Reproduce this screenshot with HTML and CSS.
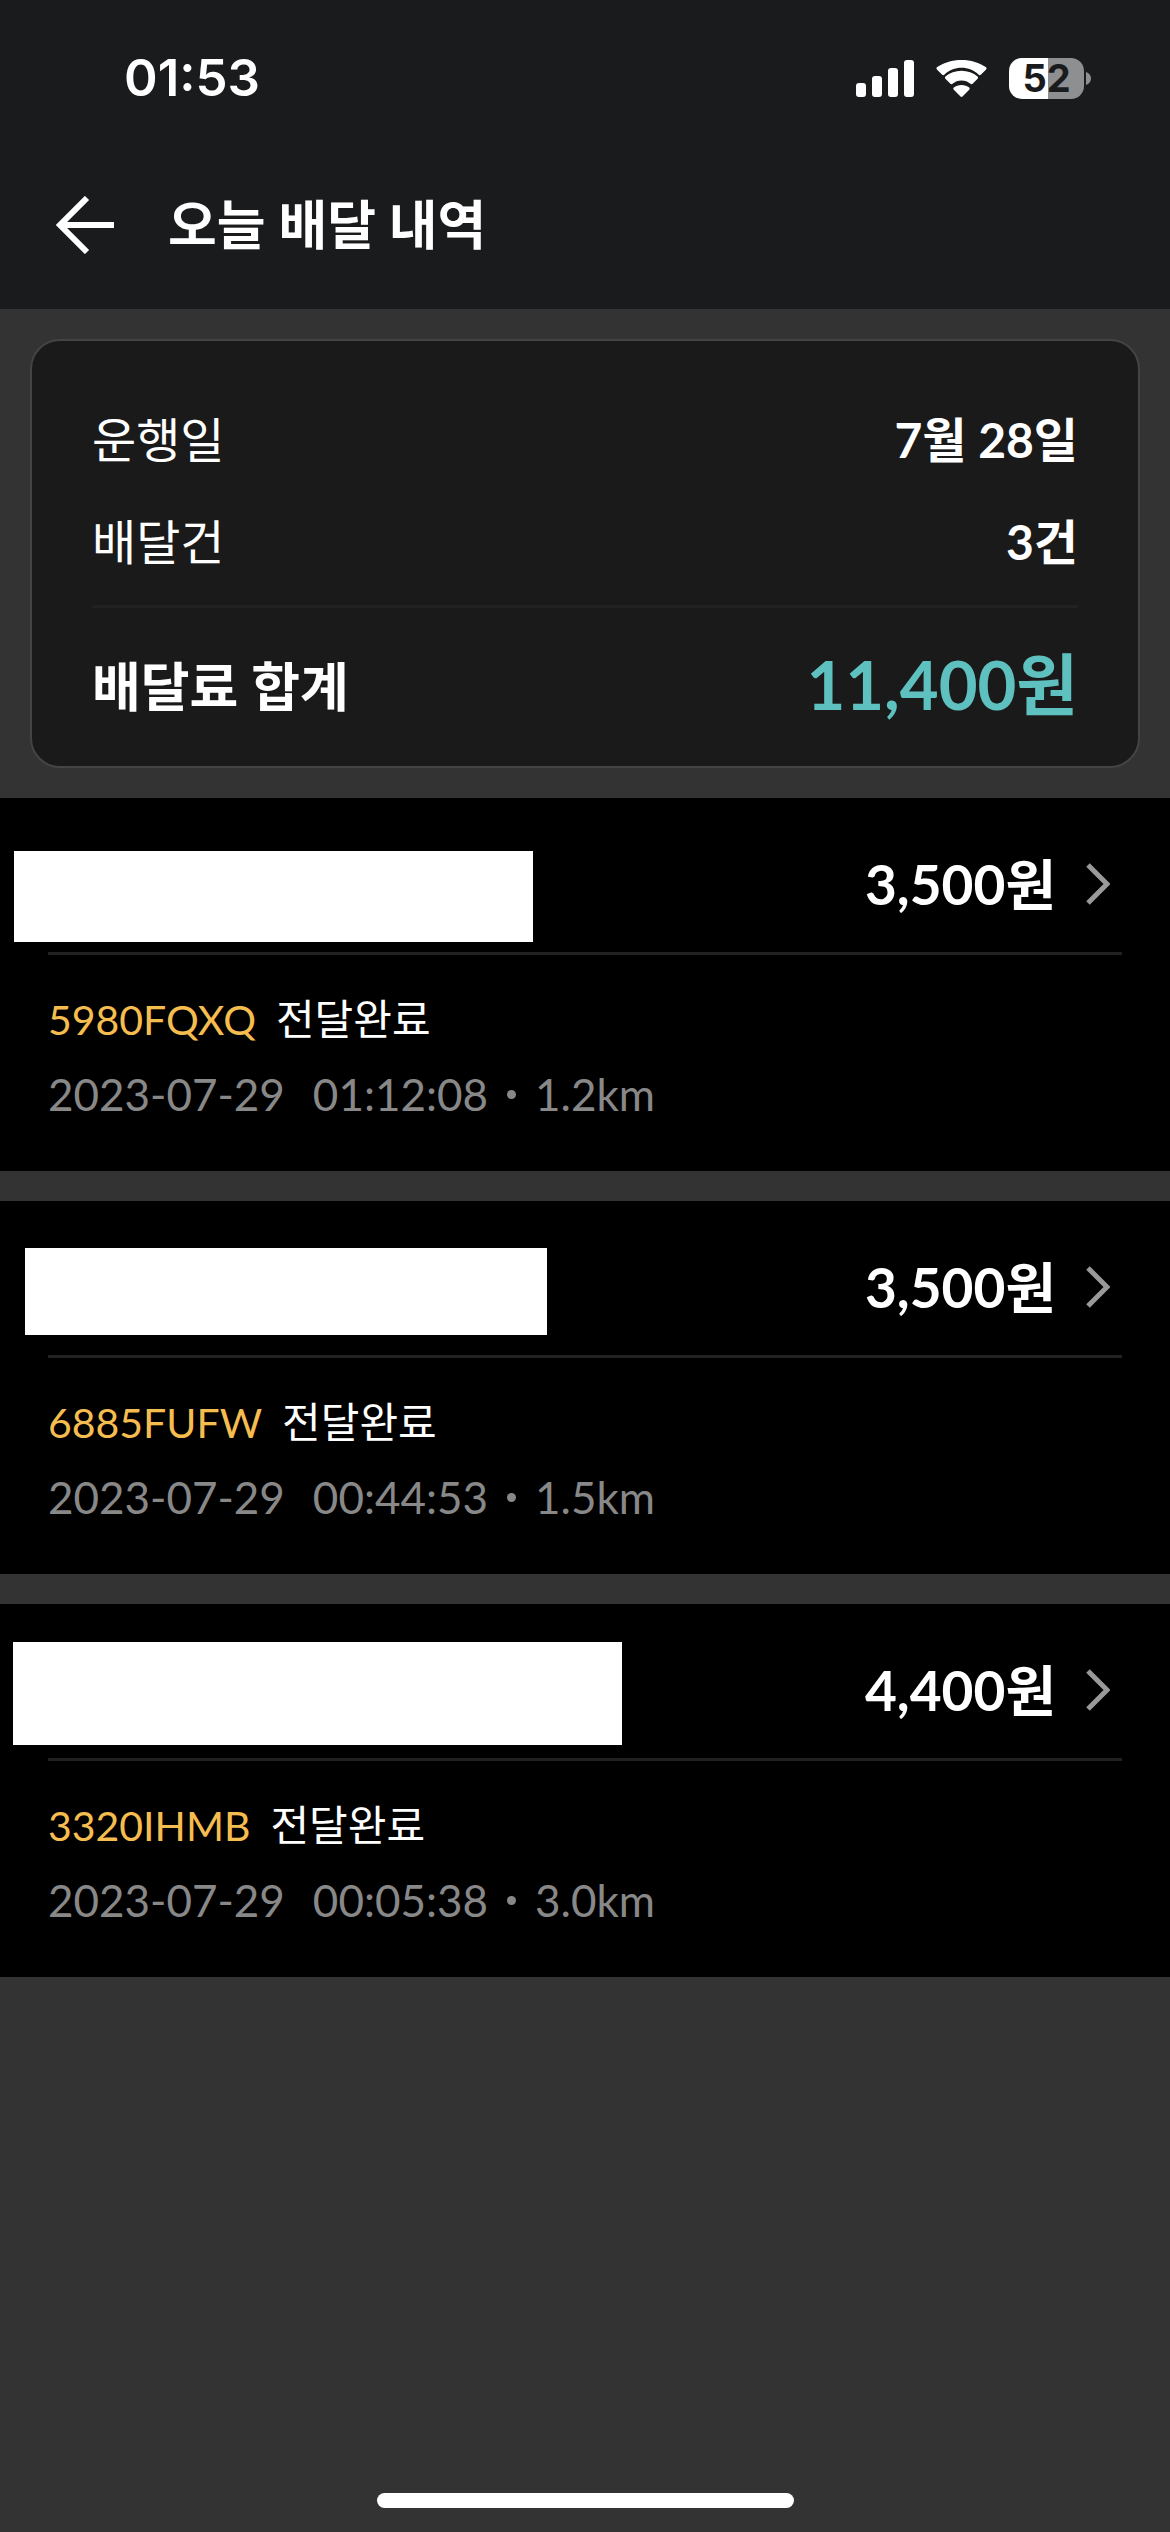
FILE: index.html
```html
<!DOCTYPE html>
<html lang="ko">
<head>
<meta charset="utf-8">
<meta name="viewport" content="width=device-width, initial-scale=1">
<title>오늘 배달 내역</title>
<link rel="stylesheet" href="styles.css">
</head>
<body>
<header class="top">
  <div class="status">
    <time class="clock">01:53</time>
    <div class="indicators">
      <svg class="signal" viewBox="0 0 58 37" aria-hidden="true">
        <rect x="0" y="23" width="10" height="14" rx="3"/>
        <rect x="16" y="16" width="10" height="21" rx="3"/>
        <rect x="32" y="8" width="10" height="29" rx="3"/>
        <rect x="48" y="0" width="10" height="37" rx="3"/>
      </svg>
      <svg class="wifi" viewBox="0 0 51 37" aria-hidden="true">
        <path d="M25.500 7.800c6.500 0 12.600 2.500 17.200 6.900.6.600 1.500.6 2.100 0l5.300-5.300c.6-.6.600-1.500 0-2.100C43.500 2.700 34.800 0 25.500 0S7.500 2.700.9 7.300c-.6.600-.6 1.500 0 2.100l5.300 5.300c.6.600 1.500.6 2.100 0 4.600-4.400 10.700-6.900 17.200-6.900z"/>
        <path d="M25.500 20.400c3.400 0 6.600 1.200 9 3.400.6.500 1.500.5 2.100 0l5-5c.6-.6.6-1.600 0-2.200-4.300-3.800-10-5.900-16.100-5.900s-11.800 2.100-16.100 5.900c-.6.600-.6 1.600 0 2.200l5 5c.6.500 1.500.5 2.100 0 2.400-2.200 5.600-3.400 9-3.400z"/>
        <path d="M33.200 29.700c.6-.6.6-1.500 0-2.100-2-1.700-4.700-2.700-7.700-2.700s-5.700 1-7.700 2.700c-.6.600-.6 1.500 0 2.100l6.700 6.800c.6.600 1.400.6 2 0z"/>
      </svg>
      <div class="battery">
        <span class="battery-level">52</span>
        <svg class="battery-cap" viewBox="0 0 6 13" aria-hidden="true"><path d="M0 0c3 1 5 3.500 5 6.500S3 12 0 13z"/></svg>
      </div>
    </div>
  </div>
  <div class="title-bar">
    <button class="back" type="button" aria-label="뒤로">
      <svg viewBox="0 0 60 58" aria-hidden="true"><path d="M31 2L4 29l27 27M4 29h54"/></svg>
    </button>
    <h1 class="title">오늘 배달 내역</h1>
  </div>
</header>

<main class="content">
  <dl class="summary">
    <div class="row"><dt>운행일</dt><dd>7월 28일</dd></div>
    <div class="row"><dt>배달건</dt><dd>3건</dd></div>
    <div class="row total"><dt>배달료 합계</dt><dd>11,400원</dd></div>
  </dl>

  <ul class="deliveries">
    <li class="delivery">
      <span class="mask mask-a"></span>
      <a class="fee" href="#5980FQXQ">3,500원<svg class="chevron" viewBox="0 0 24 42" aria-hidden="true"><path d="M2 2l19 19L2 40"/></svg></a>
      <div class="details">
        <p class="state"><span class="code">5980FQXQ</span><span>전달완료</span></p>
        <p class="meta"><span>2023-07-29</span><span class="time">01:12:08</span><i class="dot"></i><span>1.2km</span></p>
      </div>
    </li>
    <li class="delivery">
      <span class="mask mask-b"></span>
      <a class="fee" href="#6885FUFW">3,500원<svg class="chevron" viewBox="0 0 24 42" aria-hidden="true"><path d="M2 2l19 19L2 40"/></svg></a>
      <div class="details">
        <p class="state"><span class="code">6885FUFW</span><span>전달완료</span></p>
        <p class="meta"><span>2023-07-29</span><span class="time">00:44:53</span><i class="dot"></i><span>1.5km</span></p>
      </div>
    </li>
    <li class="delivery">
      <span class="mask mask-c"></span>
      <a class="fee" href="#3320IHMB">4,400원<svg class="chevron" viewBox="0 0 24 42" aria-hidden="true"><path d="M2 2l19 19L2 40"/></svg></a>
      <div class="details">
        <p class="state"><span class="code">3320IHMB</span><span>전달완료</span></p>
        <p class="meta"><span>2023-07-29</span><span class="time">00:05:38</span><i class="dot"></i><span>3.0km</span></p>
      </div>
    </li>
  </ul>
</main>

<footer class="home"><span class="home-bar"></span></footer>
</body>
</html>
```

FILE: styles.css
```css
* {
  box-sizing: border-box;
}

body {
  margin: 0;
  min-height: 100vh;
  display: flex;
  flex-direction: column;
  background: #333;
  color: #fff;
  font-family: Lato, "Noto Sans CJK KR", sans-serif;
  font-size: 42px;
}

h1, p, ul, dl, dd {
  margin: 0;
  padding: 0;
}

/* Header */
.top {
  background: #1a1b1d;
}

.status {
  display: flex;
  align-items: center;
  justify-content: space-between;
  height: 141px;
  padding: 15px 78px 0 124px;
}

.clock {
  font: 600 51px/60px Inter, sans-serif;
}

.indicators {
  display: flex;
  align-items: center;
  gap: 22px;
}

.signal {
  width: 58px;
  height: 37px;
  fill: #fff;
}

.wifi {
  width: 51px;
  height: 37px;
  fill: #fff;
}

.battery {
  display: flex;
  align-items: center;
  gap: 2px;
}

.battery-level {
  width: 75px;
  border-radius: 13px;
  background: linear-gradient(to right, #fff 52%, #8e8f91 52%);
  color: #1a1b1d;
  font: 700 38px/41px Inter, sans-serif;
  text-align: center;
}

.battery-cap {
  width: 6px;
  height: 13px;
  fill: #8e8f91;
}

.title-bar {
  display: flex;
  align-items: center;
  gap: 52px;
  height: 168px;
  padding-left: 56px;
}

.back {
  display: flex;
  padding: 0;
  border: 0;
  background: none;
}

.back svg {
  width: 60px;
  height: 58px;
  fill: none;
  stroke: #fff;
  stroke-width: 6;
}

.title {
  font-size: 53px;
  font-weight: 700;
  line-height: 66px;
}

/* Summary card */
.content {
  flex: 1;
}

.summary {
  margin: 30px;
  padding: 48px 60px 0;
  border: 2px solid #444;
  border-radius: 30px;
  background: #1a1a1a;
  font-size: 48px;
}

.row {
  display: flex;
  align-items: flex-start;
  justify-content: space-between;
  line-height: 102px;
}

.row dd {
  font-weight: 700;
}

.total {
  margin-top: 12px;
  border-top: 3px solid #212121;
  font-size: 53px;
  font-weight: 700;
  line-height: 158px;
}

.total dd {
  color: #5fc1bf;
  font-size: 67px;
  line-height: 152px;
}

/* Delivery list */
.deliveries {
  display: grid;
  gap: 30px;
  list-style: none;
}

.delivery {
  position: relative;
  padding: 0 48px 39px;
  background: #000;
}

.fee {
  display: flex;
  align-items: center;
  justify-content: flex-end;
  gap: 30px;
  padding: 18px 12px 0 0;
  border-bottom: 3px solid #222;
  color: #fff;
  font-size: 55px;
  font-weight: 700;
  line-height: 136px;
  text-decoration: none;
}

.chevron {
  width: 24px;
  height: 42px;
  fill: none;
  stroke: #999;
  stroke-width: 5;
}

.details {
  padding-top: 27px;
  line-height: 75px;
}

.state,
.meta {
  display: flex;
  align-items: center;
}

.state {
  gap: 20px;
}

.code {
  color: #f5bd4f;
  font-size: 41px;
}

.meta {
  color: #888;
  font-size: 44px;
}

.time {
  margin-left: 28px;
}

.dot {
  width: 9px;
  height: 9px;
  margin: 0 19px;
  border-radius: 50%;
  background: #888;
}

/* Blank plates that cover the shop names */
.mask {
  position: absolute;
  background: #fff;
}

.mask-a {
  top: 53px;
  left: 14px;
  width: 519px;
  height: 91px;
}

.mask-b {
  top: 47px;
  left: 25px;
  width: 522px;
  height: 87px;
}

.mask-c {
  top: 38px;
  left: 13px;
  width: 609px;
  height: 103px;
}

/* Home indicator */
.home {
  display: flex;
  justify-content: center;
  padding-bottom: 24px;
}

.home-bar {
  width: 417px;
  height: 15px;
  border-radius: 8px;
  background: #fff;
}
```
